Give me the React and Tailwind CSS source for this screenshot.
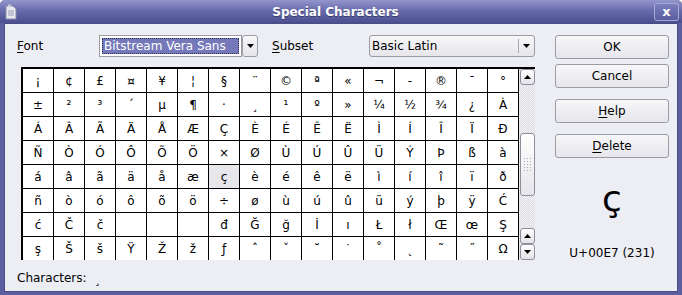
import React from 'react'

const rows = [
  Array.from('¡¢£¤¥¦§¨©ª«¬-®¯°'),
  Array.from('±²³´µ¶·¸¹º»¼½¾¿À'),
  Array.from('ÁÂÃÄÅÆÇÈÉÊËÌÍÎÏÐ'),
  Array.from('ÑÒÓÔÕÖ×ØÙÚÛÜÝÞßà'),
  Array.from('áâãäåæçèéêëìíîïð'),
  Array.from('ñòóôõö÷øùúûüýþÿĆ'),
  ['ć', 'Č', 'č', '', '', '', 'đ', 'Ğ', 'ğ', 'İ', 'ı', 'Ł', 'ł', 'Œ', 'œ', 'Ş'],
  Array.from('şŠšŸŽžƒˆˇ˘˙˚˛˜˝Ω'),
]

function Arrow({ up }) {
  return (
    <svg width="7" height="4" viewBox="0 0 7 4" className="block">
      <path d={up ? 'M0 4 L3.5 0 L7 4 Z' : 'M0 0 L7 0 L3.5 4 Z'} fill="#000" />
    </svg>
  )
}

function ScrollButton({ up }) {
  return (
    <div className="flex h-[16px] w-[15px] items-center justify-center rounded-[3px] border border-[#8f8f9c] bg-gradient-to-b from-white to-[#e2e2e8]">
      <Arrow up={up} />
    </div>
  )
}

function Button({ children, className = '' }) {
  return (
    <div
      className={`flex h-[24px] w-[114px] items-center justify-center rounded-[3px] border border-[#9b9ba6] bg-gradient-to-b from-[#f7f7f9] to-[#e6e6eb] text-[12px] text-black ${className}`}
    >
      {children}
    </div>
  )
}

function TitleBar() {
  return (
    <div className="flex h-[23px] shrink-0 items-center bg-gradient-to-b from-[#9395cb] via-[#6568a9] to-[#4c4f8f] pl-[5px] pr-[3px]">
      <svg width="12" height="16" viewBox="0 0 12 16" className="block">
        <path d="M1 2 H8 L11 5 V15 H1 Z" fill="#e8e8ee" stroke="#8a8ca8" strokeWidth="1" />
        <path d="M3 7 H9 M3 9 H9 M3 11 H9" stroke="#9a9cb6" strokeWidth="1" />
        <path d="M3 0.5 H6 V3 H3 Z" fill="#c8c9d8" />
      </svg>
      <div className="flex-1 text-center text-[12px] font-bold text-white [text-shadow:0_1px_0_#3a3c70]">
        Special Characters
      </div>
      <div className="flex h-[18px] w-[25px] items-center justify-center rounded-[3px] border border-[#a9abd6] bg-gradient-to-b from-[#7c7fbe] to-[#5a5d9e] text-[13px] font-bold leading-none text-white">
        x
      </div>
    </div>
  )
}

export default function App() {
  return (
    <div
      className="flex h-[295px] w-[682px] flex-col overflow-hidden rounded-t-[5px] bg-[#5c5f9f]"
      style={{ fontFamily: '"DejaVu Sans", Verdana, sans-serif' }}
    >
      <TitleBar />
      <div className="mx-[4px] mb-[3px] flex flex-1 border border-[#4a4c86] bg-[#edeef3]">
        <div className="flex w-[535px] flex-col pl-[12px] pt-[11px]">
          <div className="flex h-[22px] items-center text-[12px] text-black">
            <div className="w-[82px]">
              <span className="underline underline-offset-2">F</span>ont
            </div>
            <div className="flex h-[22px] w-[159px]">
              <div className="flex w-[143px] items-center border border-[#9b9ba6] bg-white p-[2px]">
                <div className="flex h-full w-full items-center border border-dotted border-[#30325a] bg-[#7579b9] pl-[1px] text-white">
                  Bitstream Vera Sans
                </div>
              </div>
              <div className="flex w-[16px] items-center justify-center rounded-[3px] border border-[#9b9ba6] bg-gradient-to-b from-[#f7f7f9] to-[#e6e6eb]">
                <Arrow />
              </div>
            </div>
            <div className="ml-[14px] w-[97px]">
              <span className="underline underline-offset-2">S</span>ubset
            </div>
            <div className="flex h-[22px] w-[166px] rounded-[3px] border border-[#9b9ba6] bg-gradient-to-b from-[#f7f7f9] to-[#e6e6eb]">
              <div className="flex flex-1 items-center pl-[2px]">Basic Latin</div>
              <div className="my-[3px] w-px bg-[#a8a8b2]" />
              <div className="flex w-[15px] items-center justify-center">
                <Arrow />
              </div>
            </div>
          </div>

          <div className="ml-[4px] mt-[10px] flex h-[193px] w-[514px] overflow-hidden border-l-2 border-t-2 border-black">
            <div className="flex w-[496px] flex-col">
              {rows.map((row, r) => (
                <div key={r} className="flex shrink-0">
                  {row.map((ch, c) => (
                    <div
                      key={c}
                      className={`flex h-[24px] w-[31px] shrink-0 items-center justify-center border-b border-r border-black text-[12px] leading-none text-black ${
                        r === 4 && c === 6 ? 'bg-[#e6e6eb]' : 'bg-white'
                      }`}
                    >
                      {ch}
                    </div>
                  ))}
                </div>
              ))}
            </div>
            <div className="flex w-[16px] flex-col items-center bg-[repeating-conic-gradient(#dcdce3_0_25%,#f3f3f6_0_50%)] bg-[length:2px_2px]">
              <ScrollButton up />
              <div className="mt-[48px] flex h-[63px] w-[15px] items-center justify-center rounded-[3px] border border-[#8f8f9c] bg-gradient-to-b from-white to-[#e6e6eb]">
                <div className="h-[16px] w-[8px] bg-[radial-gradient(#a9a9b4_0.8px,transparent_1px)] bg-[length:3px_3px]" />
              </div>
              <div className="flex-1" />
              <ScrollButton up />
              <ScrollButton />
            </div>
          </div>

          <div className="mt-[8px] flex items-center text-[12px] leading-[16px] text-black">
            <span>Characters:</span>
            <span className="ml-[8px] pt-[3px]">¸</span>
          </div>
        </div>

        <div className="flex w-[137px] flex-col pl-[15px] pt-[11px]">
          <Button>OK</Button>
          <Button className="mt-[5px]">Cancel</Button>
          <Button className="mt-[11px]">
            <span>
              <span className="underline underline-offset-2">H</span>elp
            </span>
          </Button>
          <Button className="mt-[11px]">
            <span>
              <span className="underline underline-offset-2">D</span>elete
            </span>
          </Button>
          <div className="mt-[23px] w-[114px] text-center text-[36px] leading-[36px] text-black">ç</div>
          <div className="mt-[28px] w-[114px] text-center text-[12px] leading-[16px] text-black">U+00E7 (231)</div>
        </div>
      </div>
    </div>
  )
}
